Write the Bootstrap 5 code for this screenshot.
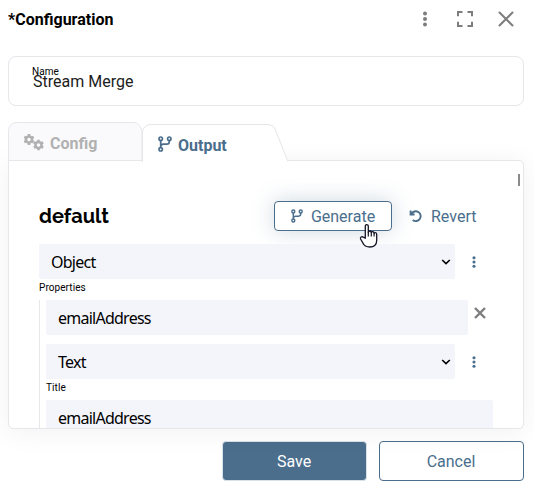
<!DOCTYPE html>
<html lang="en">
<head>
<meta charset="utf-8">
<meta name="viewport" content="width=device-width, initial-scale=1">
<title>Configuration</title>
<link href="https://cdn.jsdelivr.net/npm/bootstrap@5.3.0/dist/css/bootstrap.min.css" rel="stylesheet">
<style>
:root{--brand:#4a6e8c;--line:#e6e6eb;--field:#f4f5fa}
body{font-family:Roboto,"Liberation Sans",sans-serif;font-size:16px;color:#000;height:489px;overflow:hidden;background:#fff}
svg{display:block;flex:none}
.dialog{padding:0 10px 0 8px;height:489px}
.title-row{height:38px;margin-bottom:1px;padding-right:10px}
.title-row h1{font-size:16px;font-weight:700;margin:0;padding-top:1px;letter-spacing:0}
.tools{gap:21px;color:#7d7d7d}
.name-box{height:50px;margin-top:17px;border:1px solid var(--line);border-radius:8px;padding:9px 0 0 24px}
.tiny{font-size:10px;line-height:12px;letter-spacing:.08px}
.name-box .tiny{margin-left:-1px}
.name-value{line-height:20px;margin-top:-6px;color:#1c1c1c}
.tabs{height:39px;margin-top:16px;position:relative;z-index:1}
.tab-shape{position:absolute;left:0;top:0}
.tab-label{position:relative;font-weight:700;line-height:20px}
.tab-off{color:#b1b1b1;width:134px;padding:11px 0 0 15px;gap:6px}
.tab-off svg{margin-top:-3px}
.tab-on{color:var(--brand);padding:13px 0 0 16px;gap:6px}
.tab-on svg{margin-top:-3px}
.tab-label span{padding-top:1px}
.panel{height:269px;margin-top:-1px;border:1px solid var(--line);border-radius:0 5px 5px 5px;box-shadow:0 3px 28px rgba(0,0,0,.06);background:#fff;overflow:hidden}
.pane-wrap{position:relative;background:#fff}
.body-pad{padding:40px 30px 0 30px}
.head-row{height:30px}
.head-row h2{font-family:Raleway,Lato,sans-serif;font-size:20px;font-weight:700;line-height:30px;margin:0;width:235px}
.btn{--bs-btn-border-radius:4px;font-size:16px;line-height:20px;padding:0}
.btn span{padding-top:1px}
.btn-gen{width:118px;height:30px;border:1px solid var(--brand);color:var(--brand);background:#fff;box-shadow:0 0 22px rgba(74,110,140,.27);gap:8px}
.btn-rev{margin-left:17px;color:var(--brand);gap:8px;border:0}
.field{height:35px;background:var(--field);border-radius:2px;padding:1px 4px 0 12px;font-family:"Noto Sans","Open Sans",sans-serif;font-size:16px;letter-spacing:-.75px;line-height:35px}
.w-select{width:416px}
.w-inner{width:409px}
.w-name{width:422px}
.w-title{width:447px}
.nested{border-left:1px solid var(--line);padding-left:6px;margin-top:6px}
.dots{margin-left:17px;color:var(--brand)}
.type-row{margin-top:13px}
.label-props{margin-top:3px}
.inner-row{margin-top:9px}
.label-title{margin:3px 0 6px}
.remove-x{margin:7px 0 0 6px}
.scroll-thumb{position:absolute;right:4px;top:13px;width:2px;height:12px;background:#8a8a8a}
.hand{position:absolute;left:351px;top:62px}
.actions{gap:12px;margin-top:12px}
.btn-save,.btn-cancel{width:145px;height:40px;padding:1px 1px 0 0}
.btn-save{background:var(--brand);color:#fff;border:1px solid #d8e0e8}
.btn-cancel{color:var(--brand);border:1px solid var(--brand);background:#fff}
</style>
</head>
<body>
<svg width="0" height="0" class="position-absolute" aria-hidden="true">
<defs>
<symbol id="branch" viewBox="0 0 14 16"><g fill="none" stroke="currentColor" stroke-width="1.700"><circle cx="2.700" cy="2.700" r="1.700"/><circle cx="2.700" cy="13.300" r="1.700"/><circle cx="11.300" cy="2.700" r="1.700"/><path d="M2.700 4.500v7M11.300 4.500v1.300q0 2.400-2.500 2.400H5.500q-2.800 0-2.800 2.500"/></g></symbol>
<symbol id="kebab" viewBox="0 0 4 12"><circle cx="2" cy="1.700" r="1.550" fill="currentColor"/><circle cx="2" cy="6" r="1.550" fill="currentColor"/><circle cx="2" cy="10.300" r="1.550" fill="currentColor"/></symbol>
<symbol id="chev" viewBox="0 0 10 6"><path d="M1.200 1 5 4.600 8.800 1" fill="none" stroke="#000" stroke-width="1.600"/></symbol>
<symbol id="gear" viewBox="-5.500 -5.500 11 11"><circle r="3" fill="none" stroke="currentColor" stroke-width="2.600"/><path d="M0-5.400V-3.500M0 5.400V3.500M4.700-2.700 3-1.750M-4.700-2.700-3-1.750M4.700 2.700 3 1.750M-4.700 2.700-3 1.750" stroke="currentColor" stroke-width="2.600"/></symbol>
</defs>
</svg>
<main class="dialog d-flex flex-column">
  <header class="title-row d-flex align-items-center justify-content-between">
    <h1>*Configuration</h1>
    <div class="tools d-flex align-items-center">
      <svg width="6" height="16" viewBox="0 0 6 16" fill="currentColor"><circle cx="3" cy="2.400" r="2"/><circle cx="3" cy="8" r="2"/><circle cx="3" cy="13.600" r="2"/></svg>
      <svg width="28" height="16" viewBox="0 0 28 16" fill="none" stroke="currentColor" stroke-width="2"><path d="M9 5.200V1h4.500M18.500 1H23v4.200M9 10.800V15h4.500M18.500 15H23v-4.200"/></svg>
      <svg width="16" height="16" viewBox="0 0 16 16" fill="none" stroke="currentColor" stroke-width="2" stroke-linecap="round"><path d="m1.500 1.500 13 13m0-13-13 13"/></svg>
    </div>
  </header>
  <section class="name-box">
    <div class="tiny">Name</div>
    <div class="name-value">Stream Merge</div>
  </section>
  <nav class="tabs d-flex align-items-start">
    <svg class="tab-shape" width="290" height="41" viewBox="0 0 290 41">
      <path d="M.5 38.500V8.500a8 8 0 0 1 8-8H126q5 0 8 8v30z" fill="#fafafd" stroke="#e6e6eb"/>
      <path d="M134.500 40.500V10.500a8 8 0 0 1 8-8H261q5 0 7.500 5L280 39.500v1z" fill="#fff"/>
      <path d="M134.500 40V10.500a8 8 0 0 1 8-8H259q6 0 8 4.500L280 39.500" fill="none" stroke="#e6e6eb"/>
    </svg>
    <div class="tab-label tab-off d-flex align-items-center">
      <svg width="21" height="17" viewBox="0 0 21 17"><use href="#gear" x=".5" y="0" width="11" height="11"/><use href="#gear" x="10" y="5.500" width="11" height="11"/></svg>
      <span>Config</span>
    </div>
    <div class="tab-label tab-on d-flex align-items-center">
      <svg width="14" height="16"><use href="#branch"/></svg>
      <span>Output</span>
    </div>
  </nav>
  <section class="pane-wrap">
    <div class="panel">
      <div class="body-pad">
        <div class="head-row d-flex align-items-center">
          <h2>default</h2>
          <button class="btn btn-gen d-flex align-items-center justify-content-center"><svg width="12" height="14"><use href="#branch"/></svg><span>Generate</span></button>
          <button class="btn btn-rev d-flex align-items-center"><svg width="14" height="14" viewBox="0 0 14 14" fill="none" stroke="currentColor" stroke-width="1.900"><path d="M1.600 1.500v4h4M2.400 5A4.900 4.900 0 1 1 3.700 11"/></svg><span>Revert</span></button>
        </div>
        <div class="d-flex align-items-center type-row">
          <div class="field w-select d-flex align-items-center justify-content-between"><span>Object</span><svg width="10" height="6"><use href="#chev"/></svg></div>
          <svg class="dots" width="4" height="12"><use href="#kebab"/></svg>
        </div>
        <div class="tiny label-props">Properties</div>
        <div class="nested">
          <div class="d-flex align-items-start">
            <div class="field w-name">emailAddress</div>
            <svg class="remove-x" width="12" height="12" viewBox="0 0 12 12" fill="none" stroke="#7d7d7d" stroke-width="2.400"><path d="m1 1 10 10m0-10L1 11"/></svg>
          </div>
          <div class="d-flex align-items-center inner-row">
            <div class="field w-inner d-flex align-items-center justify-content-between"><span>Text</span><svg width="10" height="6"><use href="#chev"/></svg></div>
            <svg class="dots" width="4" height="12"><use href="#kebab"/></svg>
          </div>
          <div class="tiny label-title">Title</div>
          <div class="field w-title">emailAddress</div>
        </div>
      </div>
    </div>
    <span class="scroll-thumb"></span>
    <svg class="hand" width="20" height="26" viewBox="0 0 20 26"><path d="M6.300 15.200V3.300q0-1.700 1.500-1.700t1.500 1.700v6q.2-1.300 1.500-1.300 1.400 0 1.500 1.600.3-.9 1.400-.9 1.200 0 1.400 1.700.4-.8 1.300-.7 1.300.1 1.300 1.700v6q0 3.400-2 5.100-1.500 1.500-5 1.500-4.500 0-6-2.700L1.600 16q-.5-1.400.5-2 1-.6 2.300.2z" fill="#fff" stroke="#151525" stroke-width="1.300" stroke-linejoin="round"/><path d="M9.300 9v4.500M12.300 9.600v4M15.100 10.500v3" stroke="#151525" stroke-width="1.200"/></svg>
  </section>
  <footer class="actions d-flex justify-content-end">
    <button class="btn btn-save">Save</button>
    <button class="btn btn-cancel">Cancel</button>
  </footer>
</main>
<script src="https://cdn.jsdelivr.net/npm/bootstrap@5.3.0/dist/js/bootstrap.bundle.min.js"></script>
</body>
</html>
